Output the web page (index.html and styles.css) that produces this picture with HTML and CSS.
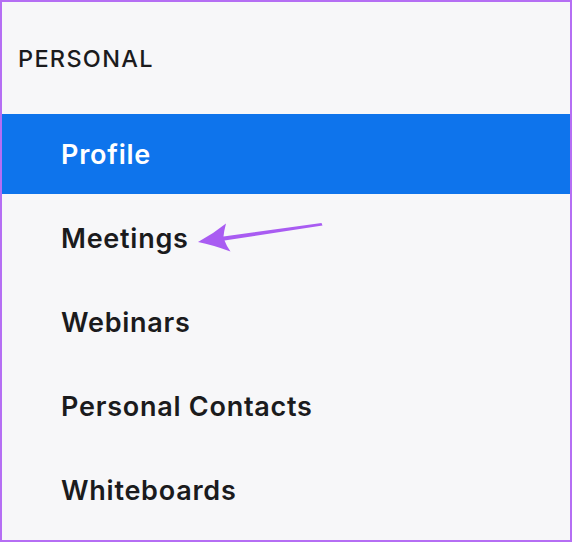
FILE: index.html
```html
<!DOCTYPE html>
<html lang="en">
<head>
<meta charset="utf-8">
<title>Personal</title>
<link rel="stylesheet" href="styles.css">
</head>
<body>
<div class="panel">
  <div class="section-title">PERSONAL</div>
  <nav class="menu">
    <div class="item active">Profile</div>
    <div class="item">Meetings</div>
    <div class="item">Webinars</div>
    <div class="item">Personal Contacts</div>
    <div class="item">Whiteboards</div>
  </nav>
  <svg class="arrow" width="572" height="542" viewBox="0 0 572 542" aria-hidden="true">
    <path d="M198 242 Q213 234 226 223.5 Q224 231 223.5 236.5 L321.5 223 L322.5 225.5 L224.5 240.5 Q226.5 246 230.5 251.5 Q213 245 198 242 Z" fill="#a95cf2"/>
  </svg>
</div>
</body>
</html>
```
FILE: styles.css
```css
html, body {
  margin: 0;
  padding: 0;
}
body {
  font-family: Inter, "Noto Sans", "Liberation Sans", sans-serif;
  color: #1b1b1d;
}
.panel {
  position: relative;
  box-sizing: border-box;
  width: 572px;
  height: 542px;
  border: 2px solid #b56ef4;
  background: #f7f7f9;
  display: flex;
  flex-direction: column;
}
.section-title {
  height: 112px;
  display: flex;
  align-items: center;
  padding-left: 16px;
  font-size: 23.5px;
  font-weight: 500;
  letter-spacing: 1.3px;
}
.menu {
  display: flex;
  flex-direction: column;
  gap: 4px;
}
.item {
  height: 80px;
  display: flex;
  align-items: center;
  padding-left: 59px;
  font-size: 27px;
  font-weight: 600;
  letter-spacing: 0.75px;
}
.item.active {
  background: #0e74ec;
  color: #ffffff;
}
.arrow {
  position: absolute;
  left: -2px;
  top: -2px;
  pointer-events: none;
}
```
